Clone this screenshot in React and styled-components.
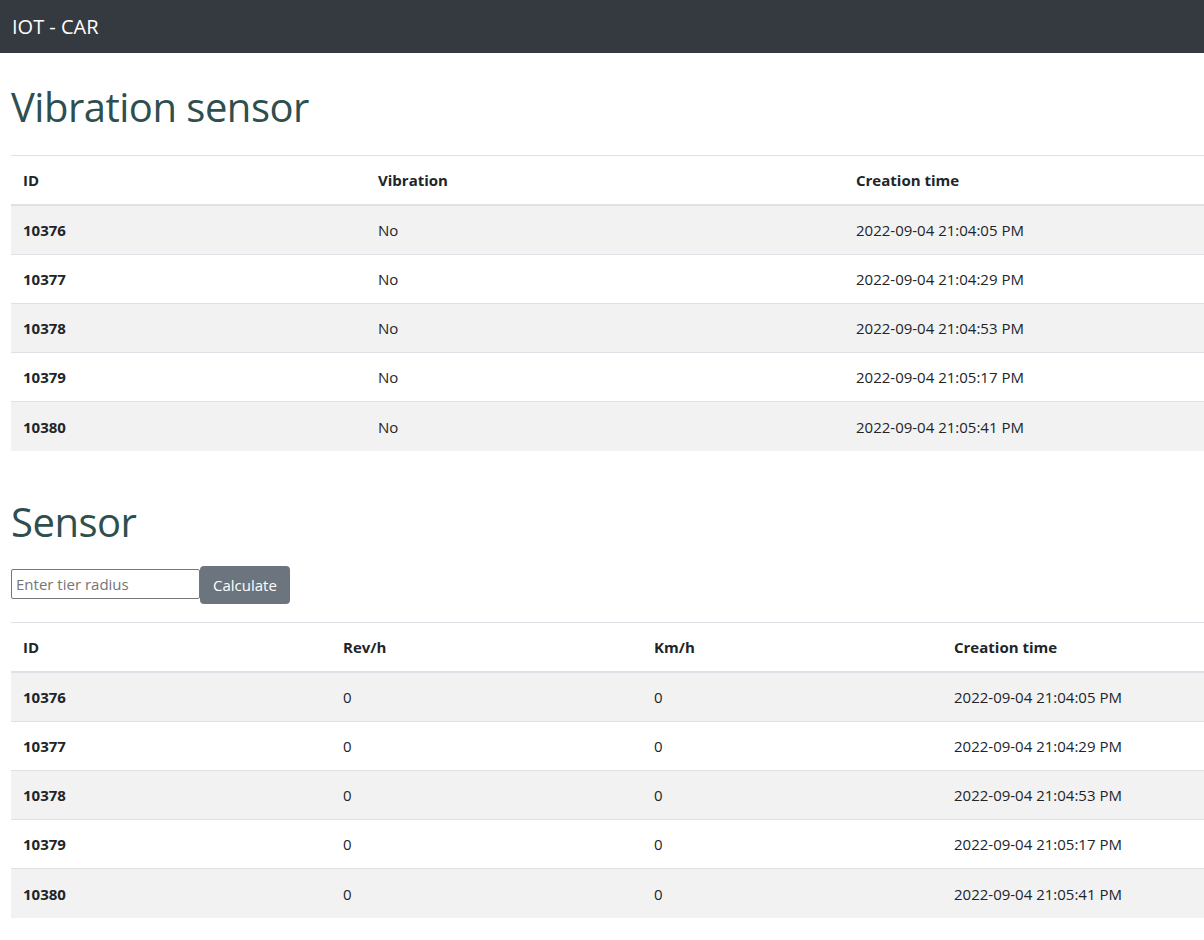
import styled, { createGlobalStyle } from "styled-components";

const GlobalStyle = createGlobalStyle`
  body {
    margin: 0;
    font-family: "Open Sans", "Noto Sans", sans-serif;
    font-size: 15px;
    color: #212529;
    background: #fff;
  }
`;

const vibrationRows = [
  { id: 10376, vibration: "No", time: "2022-09-04 21:04:05 PM" },
  { id: 10377, vibration: "No", time: "2022-09-04 21:04:29 PM" },
  { id: 10378, vibration: "No", time: "2022-09-04 21:04:53 PM" },
  { id: 10379, vibration: "No", time: "2022-09-04 21:05:17 PM" },
  { id: 10380, vibration: "No", time: "2022-09-04 21:05:41 PM" },
];

const sensorRows = vibrationRows.map((r) => ({ id: r.id, rev: 0, km: 0, time: r.time }));

function App() {
  return (
    <>
      <GlobalStyle />
      <Navbar>
        <Brand>IOT - CAR</Brand>
      </Navbar>
      <Main>
        <Title>Vibration sensor</Title>
        <Table>
          <colgroup>
            <col style={{ width: 355 }} />
            <col style={{ width: 478 }} />
            <col />
          </colgroup>
          <thead>
            <tr>
              <Th>ID</Th>
              <Th>Vibration</Th>
              <Th>Creation time</Th>
            </tr>
          </thead>
          <tbody>
            {vibrationRows.map((row, i) => (
              <Row key={row.id} $striped={i % 2 === 0}>
                <IdCell>{row.id}</IdCell>
                <Td>{row.vibration}</Td>
                <Td>{row.time}</Td>
              </Row>
            ))}
          </tbody>
        </Table>

        <Title $spaced>Sensor</Title>
        <CalcForm>
          <RadiusInput placeholder="Enter tier radius" />
          <CalcButton type="button">Calculate</CalcButton>
        </CalcForm>
        <Table>
          <colgroup>
            <col style={{ width: 320 }} />
            <col style={{ width: 311 }} />
            <col style={{ width: 300 }} />
            <col />
          </colgroup>
          <thead>
            <tr>
              <Th>ID</Th>
              <Th>Rev/h</Th>
              <Th>Km/h</Th>
              <Th>Creation time</Th>
            </tr>
          </thead>
          <tbody>
            {sensorRows.map((row, i) => (
              <Row key={row.id} $striped={i % 2 === 0}>
                <IdCell>{row.id}</IdCell>
                <Td>{row.rev}</Td>
                <Td>{row.km}</Td>
                <Td>{row.time}</Td>
              </Row>
            ))}
          </tbody>
        </Table>
      </Main>
    </>
  );
}

const Navbar = styled.nav`
  display: flex;
  align-items: center;
  height: 53px;
  padding: 0 12px;
  background: #343a40;
`;

const Brand = styled.span`
  color: #fff;
  font-size: 20px;
`;

const Main = styled.main`
  padding: 0 0 20px 11px;
  overflow: hidden;
`;

const Title = styled.h1`
  margin: ${(p) => (p.$spaced ? "47px 0 20px" : "30px 0 24px")};
  color: #2f4f4f;
  font-size: 40px;
  font-weight: 500;
  letter-spacing: -0.5px;
  line-height: 1.2;
`;

const Table = styled.table`
  width: 1200px;
  border-collapse: collapse;
  table-layout: fixed;
  border-top: 1px solid #dee2e6;
`;

const Th = styled.th`
  height: 48px;
  padding: 0 12px;
  border-bottom: 2px solid #dee2e6;
  text-align: left;
  font-weight: 700;
`;

const Row = styled.tr`
  background: ${(p) => (p.$striped ? "#f2f2f2" : "#fff")};

  &:last-child td {
    height: 49px;
    border-bottom: none;
  }
`;

const Td = styled.td`
  height: 48px;
  padding: 0 12px;
  border-bottom: 1px solid #dee2e6;
`;

const IdCell = styled(Td)`
  font-weight: 700;
`;

const CalcForm = styled.form`
  display: flex;
  align-items: center;
  margin-bottom: 18px;
`;

const RadiusInput = styled.input`
  box-sizing: border-box;
  width: 189px;
  height: 30px;
  margin-top: -2px;
  padding: 1px 4px;
  border: 1px solid #767676;
  border-radius: 2px;
  font-family: inherit;
  font-size: 15px;
  color: #212529;

  &::placeholder {
    color: #757575;
  }
`;

const CalcButton = styled.button`
  height: 38px;
  padding: 0 13px;
  border: none;
  border-radius: 4px;
  background: #6c757d;
  color: #fff;
  font-family: inherit;
  font-size: 15px;
  cursor: pointer;
`;

export default App;
